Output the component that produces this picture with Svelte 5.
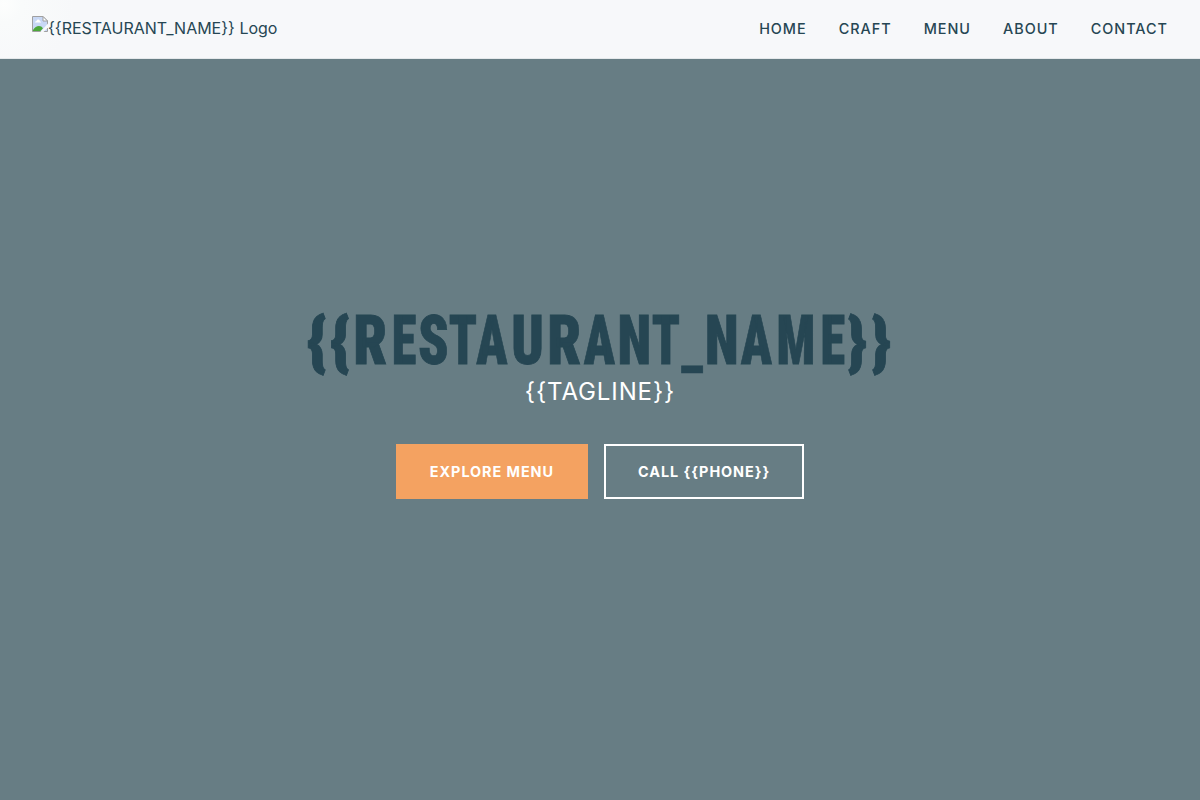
<script>
  const links = ['Home', 'Craft', 'Menu', 'About', 'Contact'];
  const name = '{{RESTAURANT_NAME}}';
  const tagline = '{{TAGLINE}}';
  const phone = '{{PHONE}}';
  // centre of each title letter, measured from the left of the title
  const centers = [17, 40.2, 70.2, 104, 133.5, 163, 192, 227.5, 264.2, 299.3, 334.2, 366, 392.2, 421.8, 456.3, 495.8, 532.9, 557, 581];
  // horizontal scale that gives each letter its condensed width
  const widths = { '{': 1.03, '}': 1.03, R: 0.87, E: 0.73, S: 0.81, T: 0.74, A: 0.75, U: 0.82, N: 0.8, M: 0.74, _: 0.82 };
  const letters = [...name].map((char, i) => {
    const brace = char === '{' || char === '}';
    const sy = brace ? 0.93 : char === '_' ? 0.84 : 0.99;
    const y = char === '_' ? 61.5 : 59.7;
    return { char, transform: `translate(${centers[i]} ${y}) scale(${widths[char]} ${sy})` };
  });
</script>

<div class="page">
  <header>
    <a class="brand" href="#home">
      <svg width="16" height="16" viewBox="0 0 16 16" aria-hidden="true">
        <path d="M.5 .5H11L15.5 5V15.5H.5Z" fill="#c8d8f5" stroke="#a0a0a0" />
        <path d="M3 6.5Q3 5 4.5 5Q5 3.3 6.5 3.6Q8 4 7.8 5.2Q9 5.3 9 6.5Z" fill="#fff" />
        <path d="M1 15V14Q3.5 10 7 10Q9.5 10 11 12.3L8.5 15Z" fill="#4da83b" />
        <path d="M11 .5V5H15.5Z" fill="#fff" stroke="#a0a0a0" />
        <path d="M16 7.5L8.3 16H11.5L16 11.5Z" fill="#f7f9fb" />
      </svg><span>{name} Logo</span>
    </a>
    <nav>
      {#each links as link}<a href={'#' + link.toLowerCase()}>{link}</a>{/each}
    </nav>
  </header>
  <main>
    <h1>
      <svg width="600" height="69" viewBox="0 0 600 69">
        {#each letters as letter}<text transform={letter.transform}>{letter.char}</text>{/each}
      </svg>
    </h1>
    <p>{tagline}</p>
    <div class="actions">
      <a class="button primary" href="#menu">Explore Menu</a>
      <a class="button outline" href="#contact">Call {phone}</a>
    </div>
  </main>
</div>

<style>
  :global(body) { margin: 0; }
  .page { height: 800px; display: flex; flex-direction: column; overflow: hidden; background: #677d84; color: #264653; font: 16px/1.6 Inter, sans-serif; }
  a { color: inherit; text-decoration: none; }
  header { box-sizing: border-box; height: 59px; flex: none; display: flex; align-items: center; justify-content: space-between; padding: 0 32px; background: radial-gradient(circle at 4px 4px, #fdfefd, #f9fbfb 18px, #f7f8fa 70px); border-bottom: 1px solid #e5e9eb; }
  .brand { display: flex; align-items: center; height: 26px; }
  .brand svg { align-self: flex-start; }
  nav { display: flex; gap: 32px; }
  nav a { font-size: 14.4px; font-weight: 500; letter-spacing: 1px; text-transform: uppercase; }
  main { flex: 1; display: flex; flex-direction: column; align-items: center; padding-top: 245px; }
  h1 { margin: 0; height: 69px; font: 900 69px Roboto, sans-serif; font-stretch: 75%; }
  h1 svg { display: block; overflow: visible; }
  h1 text { fill: #264653; stroke: #264653; stroke-width: 0.8px; text-anchor: middle; }
  p { margin: 0; font-size: 24px; line-height: 38px; letter-spacing: 0.9px; color: #fff; }
  .actions { display: flex; gap: 16px; margin-top: 33px; }
  .button { box-sizing: border-box; height: 55px; padding: 0 32px; border: 2px solid #fff; color: #fff; font-size: 14.4px; line-height: 51px; font-weight: 700; letter-spacing: 0.95px; text-transform: uppercase; }
  .primary { background: #f4a261; border-color: #f4a261; }
</style>
